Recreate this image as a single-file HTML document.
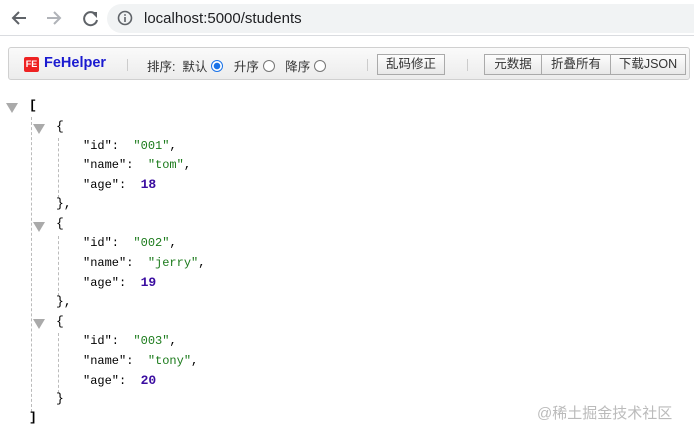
<!DOCTYPE html>
<html><head><meta charset="utf-8"><style>
*{margin:0;padding:0;box-sizing:border-box}
body{width:694px;height:434px;background:#fff;position:relative;overflow:hidden;font-family:"Liberation Sans","Noto Sans CJK SC",sans-serif}
.abs{position:absolute}
.bar{left:0;top:0;width:694px;height:36px;border-bottom:1px solid #dadce0;background:#fff}
.url{left:107px;top:4px;width:600px;height:29px;border-radius:15px;background:#f1f3f4;font-size:15px;color:#202124;padding-left:37px;line-height:29px}
.tb{left:8px;top:47px;width:682px;height:33px;border:1px solid #d0d0d0;border-radius:3px;background:linear-gradient(#fafafa,#ececec);font-size:12.5px;color:#333}
.btn{position:absolute;top:6px;height:21px;border:1px solid #aaa;background:linear-gradient(#fdfdfd,#e8e8e8);font-size:12.5px;line-height:19px;text-align:center;color:#333}
.radio{display:inline-block;width:12px;height:12px;border:1px solid #777;border-radius:50%;vertical-align:-1px;margin-left:4px;background:#fff}
.sep{position:absolute;top:11px;width:1px;height:12px;background:#ccc}
.j{position:absolute;font-family:"Liberation Mono","Noto Serif CJK SC",monospace;font-size:12px;line-height:16px;color:#000}
.s{color:#1a7a1a}.n{color:#3a0ca0;font-weight:bold;font-size:13px}
.b{font-size:13px}
.tri{position:absolute;width:0;height:0;border-left:6px solid transparent;border-right:6px solid transparent;border-top:10px solid #aaa}
.dl{position:absolute;width:0;border-left:1px dashed #bbb}
</style></head><body>
<div class="abs bar"></div>
<svg class="abs" style="left:10px;top:8px" width="90" height="20" viewBox="0 0 90 20">
<path d="M16 10H4M9 4L3 10L9 16" stroke="#5f6368" stroke-width="2" fill="none"/>
<path d="M37 10H49M44 4L50 10L44 16" stroke="#b0b3b8" stroke-width="2" fill="none"/>
<path d="M86 7A6.5 6.5 0 1 0 87 12" stroke="#5f6368" stroke-width="2" fill="none"/>
<path d="M81 4h6v6z" fill="#5f6368"/>
</svg>
<div class="abs url">localhost:5000/students</div>
<svg class="abs" style="left:117px;top:10px" width="16" height="16"><circle cx="8" cy="8" r="6.5" stroke="#5f6368" stroke-width="1.6" fill="none"/><rect x="7.2" y="7" width="1.6" height="5" fill="#5f6368"/><rect x="7.2" y="4.2" width="1.6" height="1.6" fill="#5f6368"/></svg>
<div class="abs tb">
<div class="abs" style="left:15px;top:9px;width:15px;height:15px;background:#e22;border-radius:2px;color:#fff;font-size:9px;font-weight:bold;line-height:15px;text-align:center">FE</div>
<div class="abs" style="left:35px;top:7px;font-size:14.5px;font-weight:bold;color:#1a1ad0">FeHelper</div>
<div class="sep" style="left:118px"></div>
<div class="abs" style="left:138px;top:8px">排序:&nbsp; 默认<span class="radio" style="border-color:#1a73e8;background:radial-gradient(#1a73e8 3px,#fff 3.5px)"></span>&nbsp;&nbsp; 升序<span class="radio"></span>&nbsp;&nbsp; 降序<span class="radio"></span></div>
<div class="sep" style="left:358px"></div>
<div class="btn" style="left:368px;width:68px">乱码修正</div>
<div class="sep" style="left:458px"></div>
<div class="btn" style="left:475px;width:58px">元数据</div>
<div class="btn" style="left:532px;width:70px">折叠所有</div>
<div class="btn" style="left:601px;width:76px">下载JSON</div>
</div>
<div class="tri" style="left:6px;top:103px"></div>
<div class="dl" style="left:31px;top:117px;height:295px"></div>
<div class="tri" style="left:33px;top:124px"></div>
<div class="dl" style="left:58px;top:138px;height:60px"></div>
<div class="tri" style="left:33px;top:222px"></div>
<div class="dl" style="left:58px;top:236px;height:60px"></div>
<div class="tri" style="left:33px;top:319px"></div>
<div class="dl" style="left:58px;top:333px;height:60px"></div>
<div class="j b" style="left:29px;top:98px;font-weight:bold">[</div>
<div class="j b" style="left:56px;top:119px">{</div>
<div class="j" style="left:83px;top:138px">″id″:&nbsp; <span class="s">″001″</span>,</div>
<div class="j" style="left:83px;top:157px">″name″:&nbsp; <span class="s">″tom″</span>,</div>
<div class="j" style="left:83px;top:177px">″age″:&nbsp; <span class="n">18</span></div>
<div class="j b" style="left:56px;top:196px">},</div>
<div class="j b" style="left:56px;top:216px">{</div>
<div class="j" style="left:83px;top:235px">″id″:&nbsp; <span class="s">″002″</span>,</div>
<div class="j" style="left:83px;top:255px">″name″:&nbsp; <span class="s">″jerry″</span>,</div>
<div class="j" style="left:83px;top:275px">″age″:&nbsp; <span class="n">19</span></div>
<div class="j b" style="left:56px;top:294px">},</div>
<div class="j b" style="left:56px;top:314px">{</div>
<div class="j" style="left:83px;top:333px">″id″:&nbsp; <span class="s">″003″</span>,</div>
<div class="j" style="left:83px;top:353px">″name″:&nbsp; <span class="s">″tony″</span>,</div>
<div class="j" style="left:83px;top:373px">″age″:&nbsp; <span class="n">20</span></div>
<div class="j b" style="left:56px;top:391px">}</div>
<div class="j b" style="left:29px;top:410px;font-weight:bold">]</div>
<div class="abs" style="left:537px;top:402px;font-size:15px;color:#bbb">@稀土掘金技术社区</div>
</body></html>
